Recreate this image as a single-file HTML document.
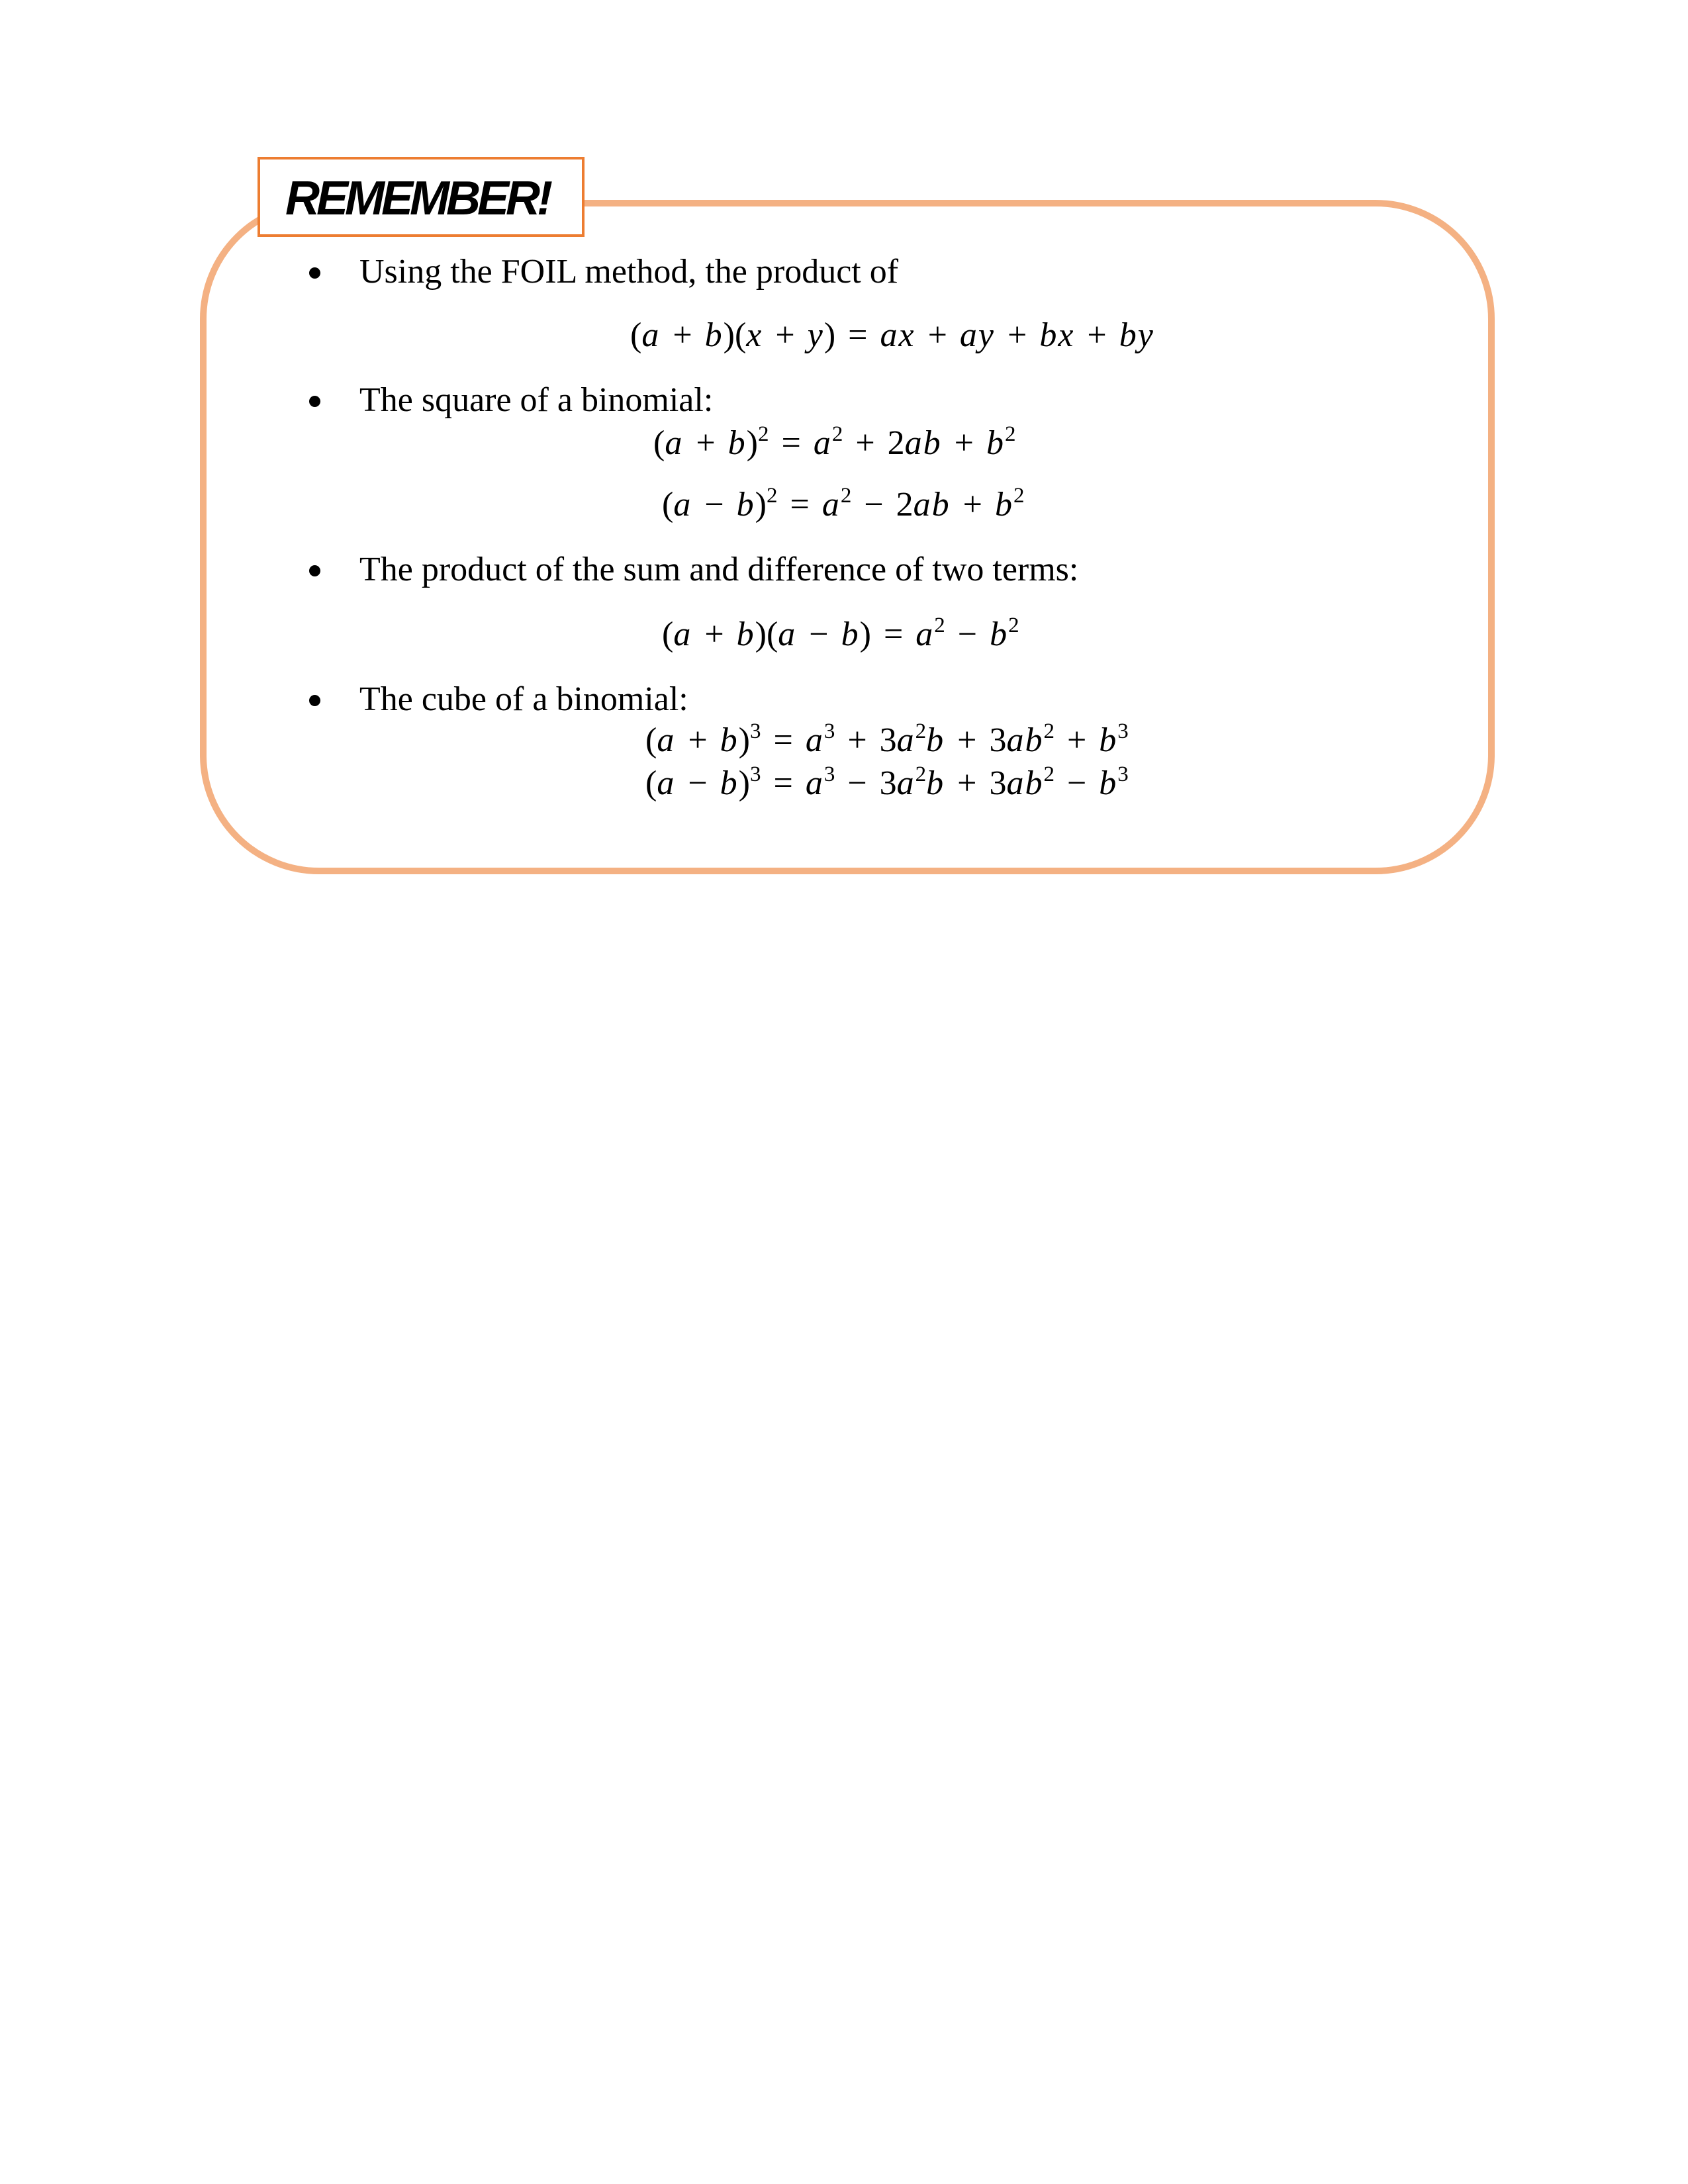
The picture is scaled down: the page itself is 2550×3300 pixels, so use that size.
<!DOCTYPE html>
<html><head><meta charset="utf-8"><style>
body{margin:0;width:2550px;height:3300px;background:#fff;position:relative;overflow:hidden;font-family:"Liberation Serif",serif;color:#000}
.box{position:absolute;left:302px;top:302px;width:1936px;height:999px;border:10px solid #f4b183;border-radius:180px}
.lab{position:absolute;left:389px;top:237px;width:486px;height:113px;border:4px solid #ed7d31;background:#fff}
.lab span{position:absolute;left:38px;top:18px;font:italic bold 72px "Liberation Sans",sans-serif;letter-spacing:-5px}
.t{position:absolute;font-size:52px;white-space:nowrap;line-height:1}
.b{position:absolute;width:17px;height:17px;border-radius:50%;background:#000}
.m{position:absolute;font-size:52px;white-space:nowrap;line-height:1;word-spacing:6px}
.m i{font-style:italic;letter-spacing:2px}
sup{font-size:33px;vertical-align:20px;line-height:0}
</style></head><body>
<div class="box"></div>
<div class="lab"><span>REMEMBER!</span></div>

<div class="b" style="left:467px;top:404px"></div>
<div class="t" style="left:543px;top:385px">Using the FOIL method, the product of</div>
<div class="m" style="left:952px;top:481px">(<i>a</i> + <i>b</i>)(<i>x</i> + <i>y</i>) = <i>ax</i> + <i>ay</i> + <i>bx</i> + <i>by</i></div>

<div class="b" style="left:467px;top:598px"></div>
<div class="t" style="left:543px;top:579px">The square of a binomial:</div>
<div class="m" style="left:987px;top:644px">(<i>a</i> + <i>b</i>)<sup>2</sup> = <i>a</i><sup>2</sup> + 2<i>ab</i> + <i>b</i><sup>2</sup></div>
<div class="m" style="left:1000px;top:737px">(<i>a</i> − <i>b</i>)<sup>2</sup> = <i>a</i><sup>2</sup> − 2<i>ab</i> + <i>b</i><sup>2</sup></div>

<div class="b" style="left:467px;top:854px"></div>
<div class="t" style="left:543px;top:835px">The product of the sum and difference of two terms:</div>
<div class="m" style="left:1000px;top:933px">(<i>a</i> + <i>b</i>)(<i>a</i> − <i>b</i>) = <i>a</i><sup>2</sup> − <i>b</i><sup>2</sup></div>

<div class="b" style="left:467px;top:1050px"></div>
<div class="t" style="left:543px;top:1031px">The cube of a binomial:</div>
<div class="m" style="left:975px;top:1093px">(<i>a</i> + <i>b</i>)<sup>3</sup> = <i>a</i><sup>3</sup> + 3<i>a</i><sup>2</sup><i>b</i> + 3<i>ab</i><sup>2</sup> + <i>b</i><sup>3</sup></div>
<div class="m" style="left:975px;top:1158px">(<i>a</i> − <i>b</i>)<sup>3</sup> = <i>a</i><sup>3</sup> − 3<i>a</i><sup>2</sup><i>b</i> + 3<i>ab</i><sup>2</sup> − <i>b</i><sup>3</sup></div>
</body></html>
